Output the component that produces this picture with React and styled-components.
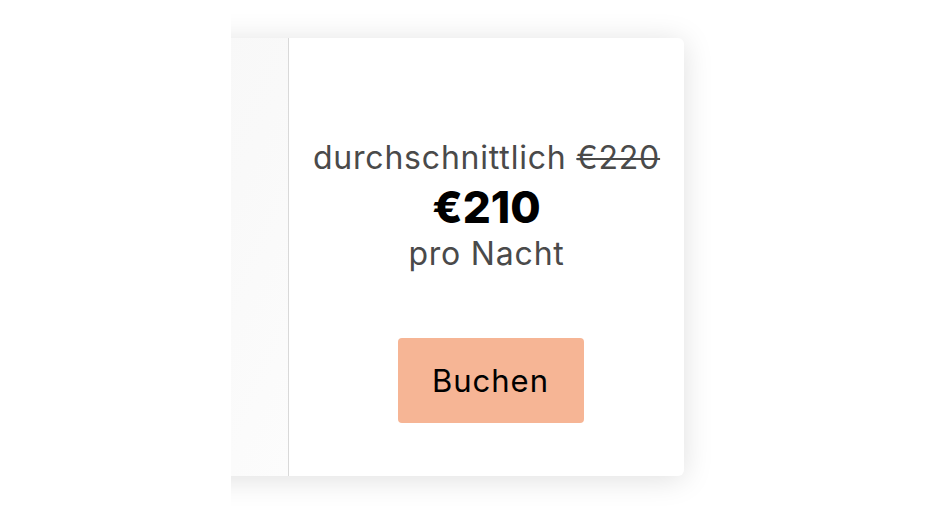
import React from "react";
import styled, { createGlobalStyle } from "styled-components";

const Global = createGlobalStyle`
  html, body { margin: 0; padding: 0; background: #fff; }
  body { font-family: "Inter", "Noto Sans", sans-serif; }
`;

const Viewport = styled.div`
  width: 929px;
  height: 523px;
  display: flex;
  background: #fff;
`;

const Clip = styled.div`
  margin-left: 231px;
  flex: 1;
  overflow: hidden;
  padding: 38px 0 0 0;
`;

const Card = styled.div`
  margin-left: -201px;
  width: 654px;
  height: 438px;
  display: flex;
  background: #fff;
  border-radius: 6px;
  box-shadow: 0 3px 30px rgba(0, 0, 0, 0.13);
`;

const Media = styled.div`
  flex: 1;
  border-radius: 6px 0 0 6px;
  background: linear-gradient(115deg, #f6f6f6 0%, #f9f9f9 60%, #fcfcfc 100%);
`;

const Booking = styled.div`
  width: 396px;
  border-left: 1px solid #d9d9d9;
  display: flex;
  flex-direction: column;
  align-items: center;
  padding-top: 98px;
  box-sizing: border-box;
`;

const Average = styled.div`
  font-size: 32px;
  letter-spacing: 0.8px;
  line-height: 44px;
  color: #4a4a4a;
  s { text-decoration-thickness: 2px; }
`;

const Price = styled.div`
  font-size: 44px;
  font-weight: 800;
  letter-spacing: 0;
  line-height: 54px;
  color: #000;
`;

const Per = styled.div`
  font-size: 32px;
  letter-spacing: 0.8px;
  line-height: 40px;
  color: #4a4a4a;
`;

const BookButton = styled.button`
  margin-top: 64px;
  margin-left: 8px;
  width: 186px;
  height: 85px;
  border: none;
  border-radius: 4px;
  background: #f6b595;
  color: #000;
  font-family: inherit;
  font-size: 31px;
  letter-spacing: 1px;
  cursor: pointer;
`;

export default function App() {
  return (
    <>
      <Global />
      <Viewport>
        <Clip>
          <Card>
            <Media />
            <Booking>
              <Average>
                durchschnittlich <s>€220</s>
              </Average>
              <Price>€210</Price>
              <Per>pro Nacht</Per>
              <BookButton>Buchen</BookButton>
            </Booking>
          </Card>
        </Clip>
      </Viewport>
    </>
  );
}
